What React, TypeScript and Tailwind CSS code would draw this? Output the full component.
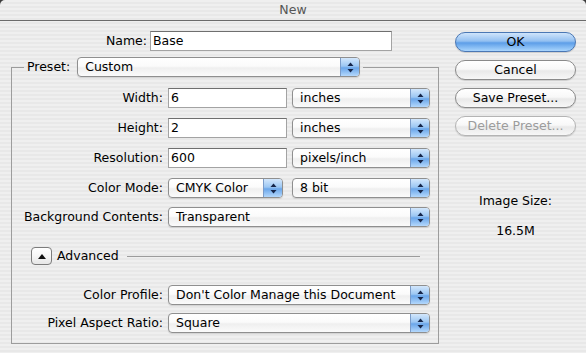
import React from "react";

function Arrows() {
  return (
    <svg width="7" height="11" viewBox="0 0 7 11">
      <path d="M3.5 0.5 L6.5 4 L0.5 4 Z" fill="#16264a" />
      <path d="M0.5 7 L6.5 7 L3.5 10.5 Z" fill="#16264a" />
    </svg>
  );
}

function TextField({ value, w }: { value: string; w: string }) {
  return (
    <div
      className={`${w} h-[20px] bg-white border border-[#a3a3a3] border-t-[#6f6f6f] pl-[2px] flex items-center leading-none`}
    >
      {value}
    </div>
  );
}

function Popup({ value, w }: { value: string; w: string }) {
  return (
    <div
      className={`${w} h-[20px] rounded-[4px] border border-[#8f8f8f] flex overflow-hidden bg-[linear-gradient(180deg,#ffffff_0%,#fbfbfb_45%,#efefef_55%,#fbfbfb_100%)] shadow-[0_1px_1px_rgba(0,0,0,0.12)]`}
    >
      <div className="flex-1 pl-[7px] flex items-center leading-none whitespace-nowrap overflow-hidden">
        {value}
      </div>
      <div className="w-[19px] border-l border-[#7b9cc9] bg-[linear-gradient(180deg,#d3e7fc_0%,#9cc7f3_45%,#6aa6ea_55%,#b4d8fc_100%)] flex items-center justify-center">
        <Arrows />
      </div>
    </div>
  );
}

function AquaButton({
  children,
  primary,
  disabled,
}: {
  children: React.ReactNode;
  primary?: boolean;
  disabled?: boolean;
}) {
  const base =
    "w-[121px] h-[20px] rounded-full flex items-center justify-center leading-none shadow-[0_1px_1px_rgba(0,0,0,0.15)]";
  if (primary) {
    return (
      <div
        className={`${base} border border-[#4a77b4] bg-[linear-gradient(180deg,#cfe4fb_0%,#93c0f1_45%,#5d9ee8_55%,#a9d5fd_100%)] text-black`}
      >
        {children}
      </div>
    );
  }
  return (
    <div
      className={`${base} border ${disabled ? "border-[#b4b4b4] text-[#9c9c9c]" : "border-[#8a8a8a] text-black"} bg-[linear-gradient(180deg,#ffffff_0%,#f8f8f8_45%,#e9e9e9_55%,#f7f7f7_100%)]`}
    >
      {children}
    </div>
  );
}

function Row({
  label,
  children,
  className,
}: {
  label: string;
  children: React.ReactNode;
  className: string;
}) {
  return (
    <div className={`flex items-center ${className}`}>
      <div className="w-[151px] text-right whitespace-nowrap leading-none">
        {label}
      </div>
      <div className="ml-[5px] flex items-center">{children}</div>
    </div>
  );
}

export default function App() {
  return (
    <div className="w-[586px] h-[353px] bg-[#3c3c3c]">
      <div className="w-full h-full rounded-t-[5px] overflow-hidden flex flex-col text-black font-['DejaVu_Sans',sans-serif] text-[12.5px] bg-[repeating-linear-gradient(180deg,#efefef_0px,#efefef_2px,#e8e8e8_2px,#e8e8e8_4px)]">
        <div className="h-[21px] border-b border-[#6b6b6b] flex items-center justify-center text-[#555555] leading-none">
          New
        </div>
        <div className="flex pt-[10px]">
          <div className="w-[440px] pl-[11px] flex flex-col">
            <div className="flex items-center">
              <div className="w-[136px] text-right leading-none">Name:</div>
              <div className="ml-[3px]">
                <TextField value="Base" w="w-[242px]" />
              </div>
            </div>
            <fieldset className="mt-[6px] w-[428px] border border-[#9c9c9c] pb-[10px]">
              <legend className="ml-[12px] px-[3px]">
                <div className="flex items-center">
                  <span className="leading-none">Preset:</span>
                  <div className="ml-[7px]">
                    <Popup value="Custom" w="w-[283px]" />
                  </div>
                </div>
              </legend>
              <Row label="Width:" className="mt-[11px]">
                <TextField value="6" w="w-[119px]" />
                <div className="ml-[5px]">
                  <Popup value="inches" w="w-[138px]" />
                </div>
              </Row>
              <Row label="Height:" className="mt-[10px]">
                <TextField value="2" w="w-[119px]" />
                <div className="ml-[5px]">
                  <Popup value="inches" w="w-[138px]" />
                </div>
              </Row>
              <Row label="Resolution:" className="mt-[10px]">
                <TextField value="600" w="w-[119px]" />
                <div className="ml-[5px]">
                  <Popup value="pixels/inch" w="w-[138px]" />
                </div>
              </Row>
              <Row label="Color Mode:" className="mt-[10px]">
                <Popup value="CMYK Color" w="w-[115px]" />
                <div className="ml-[9px]">
                  <Popup value="8 bit" w="w-[138px]" />
                </div>
              </Row>
              <Row label="Background Contents:" className="mt-[9px]">
                <Popup value="Transparent" w="w-[262px]" />
              </Row>
              <div className="mt-[20px] ml-[19px] w-[389px] h-[18px] flex items-center">
                <div className="w-[21px] h-[18px] rounded-[4px] border border-[#7c7c7c] bg-[linear-gradient(180deg,#ffffff_0%,#f6f6f6_50%,#e6e6e6_100%)] flex items-center justify-center">
                  <svg width="8" height="5" viewBox="0 0 8 5">
                    <path d="M4 0 L8 5 L0 5 Z" fill="#111" />
                  </svg>
                </div>
                <span className="ml-[5px] leading-none">Advanced</span>
                <div className="ml-[8px] flex-1 h-px bg-[#9c9c9c]" />
              </div>
              <Row label="Color Profile:" className="mt-[20px]">
                <Popup value="Don't Color Manage this Document" w="w-[262px]" />
              </Row>
              <Row label="Pixel Aspect Ratio:" className="mt-[8px]">
                <Popup value="Square" w="w-[262px]" />
              </Row>
            </fieldset>
          </div>
          <div className="ml-[15px] w-[121px] flex flex-col pt-[1px]">
            <AquaButton primary>OK</AquaButton>
            <div className="mt-[8px]">
              <AquaButton>Cancel</AquaButton>
            </div>
            <div className="mt-[8px]">
              <AquaButton>Save Preset...</AquaButton>
            </div>
            <div className="mt-[8px]">
              <AquaButton disabled>Delete Preset...</AquaButton>
            </div>
            <div className="mt-[57px] text-center leading-[15px]">Image Size:</div>
            <div className="mt-[15px] text-center leading-[15px]">16.5M</div>
          </div>
        </div>
      </div>
    </div>
  );
}
